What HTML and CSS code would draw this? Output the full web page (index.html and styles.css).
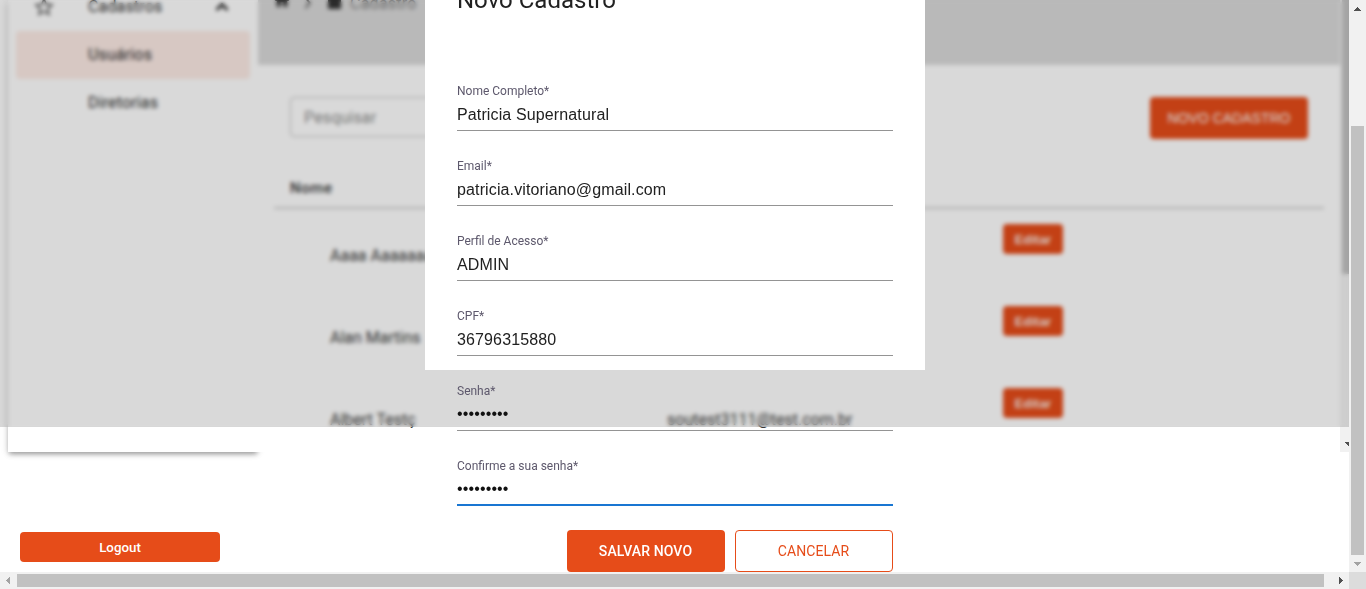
FILE: index.html
```html
<!DOCTYPE html>
<html lang="pt-BR">
<head>
<meta charset="utf-8">
<title>Novo Cadastro</title>
<link rel="stylesheet" href="styles.css">
</head>
<body>
<div class="window">
  <div class="viewport">
    <div class="app">
      <aside class="sidebar">
        <nav class="menu">
          <div class="menu-item">
            <svg class="star" viewBox="0 0 24 24"><path d="M22 9.24l-7.19-.62L12 2 9.19 8.63 2 9.24l5.46 4.73L5.82 21 12 17.27 18.18 21l-1.63-7.03L22 9.24zM12 15.4l-3.76 2.27 1-4.28-3.32-2.88 4.38-.38L12 6.1l1.71 4.04 4.38.38-3.32 2.88 1 4.28L12 15.4z"/></svg>
            <span class="menu-label">Cadastros</span>
            <svg class="caret" viewBox="0 0 24 24"><path d="M12 8l-6 6 1.41 1.41L12 10.83l4.59 4.58L18 14z"/></svg>
          </div>
          <div class="menu-item active"><span class="menu-label">Usuários</span></div>
          <div class="menu-item"><span class="menu-label">Diretorias</span></div>
        </nav>
      </aside>
      <main class="content">
        <header class="crumbs">
          <svg class="crumb-home" viewBox="0 0 24 24"><path d="M10 20v-6h4v6h5v-8h3L12 3 2 12h3v8z"/></svg>
          <svg class="crumb-sep" viewBox="0 0 10 16"><path d="M2 2l5 6-5 6"/></svg>
          <span class="crumb-box"></span>
          <span class="crumb-text">Cadastro</span>
        </header>
        <div class="toolbar">
          <div class="search">Pesquisar</div>
          <button class="btn btn-new">NOVO CADASTRO</button>
        </div>
        <div class="table">
          <div class="thead">Nome</div>
          <div class="row"><span class="name">Aaaa Aaaaaaa</span><span class="mail"></span><button class="btn btn-edit">Editar</button></div>
          <div class="row"><span class="name">Alan Martins</span><span class="mail"></span><button class="btn btn-edit">Editar</button></div>
          <div class="row"><span class="name">Albert Testç</span><span class="mail">soutest3111@test.com.br</span><button class="btn btn-edit">Editar</button></div>
        </div>
      </main>
      <div class="inner-scroll">
        <div class="inner-thumb"></div>
        <svg class="inner-arrow" viewBox="0 0 17 17"><path d="M5 7h7v1h-1v1h-1v1H9v1H8v-1H7V9H6V8H5z"/></svg>
      </div>
    </div>
    <footer class="logout-area"><button class="btn btn-logout">Logout</button></footer>

    <div class="overlay">
      <section class="modal">
        <h2 class="modal-title">Novo Cadastro</h2>
        <form class="form">
          <div class="field"><label>Nome Completo*</label><div class="value">Patricia Supernatural</div></div>
          <div class="field"><label>Email*</label><div class="value">patricia.vitoriano@gmail.com</div></div>
          <div class="field"><label>Perfil de Acesso*</label><div class="value">ADMIN</div></div>
          <div class="field"><label>CPF*</label><div class="value">36796315880</div></div>
          <div class="field"><label>Senha*</label><div class="value dots">•••••••••</div></div>
          <div class="field focused"><label>Confirme a sua senha*</label><div class="value dots">•••••••••</div></div>
          <div class="actions">
            <button type="button" class="btn btn-action">SALVAR NOVO</button>
            <button type="button" class="btn btn-action outlined">CANCELAR</button>
          </div>
        </form>
      </section>
    </div>
  </div>
  <div class="vbar">
    <svg class="arrow dark" viewBox="0 0 17 17"><path d="M8 7h1v1h1v1h1v1h1v1H5v-1h1V9h1V8h1z"/></svg>
    <div class="vthumb"></div>
    <svg class="arrow" viewBox="0 0 17 17"><path d="M5 7h7v1h-1v1h-1v1H9v1H8v-1H7V9H6V8H5z"/></svg>
  </div>
  <div class="hbar">
    <svg class="arrow" viewBox="0 0 17 17"><path d="M10 5v7H9v-1H8v-1H7V9H6V8h1V7h1V6h1V5z"/></svg>
    <div class="hthumb"></div>
    <svg class="arrow dark" viewBox="0 0 17 17"><path d="M7 5v7h1v-1h1v-1h1V9h1V8h-1V7H9V6H8V5z"/></svg>
  </div>
  <div class="corner"></div>
</div>
</body>
</html>
```

FILE: styles.css
```css
* { box-sizing: border-box; }
body { margin: 0; overflow: hidden; font-family: Roboto, sans-serif; color: #212121; }
svg { display: block; flex: none; fill: currentColor; }

.window {
  display: grid;
  grid-template: 572px 17px / 1349px 17px;
  width: 1366px;
  height: 589px;
}
.viewport { position: relative; overflow: hidden; background: #fff; }

.btn {
  border: 0;
  border-radius: 4px;
  padding: 0;
  background: #e64c19;
  color: #fff;
  font: 500 14px Roboto, sans-serif;
}

/* Application behind the dialog */
.app { display: flex; width: 1357px; height: 452px; padding-left: 8px; }
.sidebar {
  width: 250px;
  background: #fff;
  box-shadow: 0 3px 5px -1px rgba(0,0,0,.35), 0 1px 8px rgba(0,0,0,.12);
}
.menu { margin-top: -17px; padding: 0 8px; }
.menu-item { display: flex; align-items: center; height: 48px; padding-left: 72px; border-radius: 4px; }
.menu-item.active { background: #fdebe6; }
.menu-item:first-child { padding: 0 16px; }
.menu-label { font-size: 16px; line-height: 24px; letter-spacing: .15px; color: #2c2c2c; }
.star { width: 24px; height: 24px; margin-right: 32px; color: #555; }
.caret { width: 24px; height: 24px; margin-left: auto; stroke: currentColor; }

.content { position: relative; width: 1082px; height: 452px; background: #fff; }
.crumbs { display: flex; height: 65px; padding-left: 15px; background: #dadada; color: #333; }
.crumbs > * { flex: none; }
.crumb-home { width: 18px; height: 18px; margin-top: -8px; }
.crumb-sep { width: 10px; height: 14px; margin: -4px 0 0 12px; fill: none; stroke: #555; stroke-width: 2; }
.crumb-box { width: 13px; height: 14px; margin: -5px 9px 0 15px; background: #333; }
.crumb-text { margin-top: -8px; font-size: 16px; line-height: 24px; letter-spacing: .25px; color: #808080; }

.toolbar { display: flex; justify-content: space-between; padding: 32px 32px 0; height: 102px; }
.search {
  width: 320px;
  height: 40px;
  padding-left: 13px;
  border: 1px solid #bdbdbd;
  border-radius: 4px;
  font-size: 16px;
  line-height: 40px;
  letter-spacing: .15px;
  color: #8a8a8a;
}
.btn-new { width: 158px; height: 42px; font: 14px "Liberation Sans", sans-serif; }
.table { padding: 0 16px; }
.thead { height: 42px; padding-left: 16px; border-bottom: 2px solid #d0d0d0; font-size: 15px; font-weight: 500; line-height: 42px; letter-spacing: .6px; color: #333; }
.row { display: grid; grid-template-columns: 337px 336px 60px; height: 82px; padding: 15px 0 0 56px; }
.name, .mail { padding-top: 20px; font-size: 16px; line-height: 24px; color: #383838; }
.btn-edit { height: 30px; font: bold 13px "Liberation Sans", sans-serif; color: #fbeae4; }

.inner-scroll { display: flex; flex-direction: column; justify-content: space-between; width: 17px; background: #f1f1f1; }
.inner-thumb { width: 13px; height: 274px; margin-left: 2px; background: #c1c1c1; }
.inner-arrow { width: 17px; height: 17px; color: #505050; shape-rendering: crispEdges; }

.logout-area { padding: 80px 20px 0; }
.btn-logout { width: 200px; height: 30px; font-size: 13.33px; }

/* Dialog */
.overlay {
  position: absolute;
  inset: 0 0 auto;
  height: 427px;
  background: rgba(0,0,0,.15);
}
.overlay::before { content: ""; position: absolute; inset: 0; backdrop-filter: blur(2px); }
.modal { position: relative; width: 500px; height: 370px; margin-left: 425px; padding: 0 32px; background: #fff; }
.modal-title { margin: -16px 0 67px; font-size: 24px; font-weight: 400; line-height: 32px; color: #212121; }
.modal::before { content: ""; display: table; }
.field { height: 48px; margin-bottom: 27px; border-bottom: 1px solid #949494; }
.field label { display: block; height: 17px; font-size: 12px; line-height: 16px; color: #5d586c; }
.value { font: 16px/30px "Liberation Sans", sans-serif; letter-spacing: .13px; }
.value.dots { line-height: 28px; color: #111; }
.focused { border-bottom: 2px solid #1976d2; margin-bottom: 24px; }
.actions { display: flex; justify-content: flex-end; gap: 10px; }
.btn-action { width: 158px; height: 42px; padding-right: 1px; letter-spacing: .1px; }
.outlined { border: 1px solid #e64c19; background: #fff; color: #e64c19; font-weight: 400; }

/* Scrollbars */
.vbar, .hbar { display: flex; background: #f1f1f1; }
.vbar { flex-direction: column; justify-content: space-between; }
.arrow { width: 17px; height: 17px; color: #a3a3a3; shape-rendering: crispEdges; }
.arrow.dark { color: #505050; }
.vthumb { width: 13px; height: 429px; margin: 109px 2px 0; background: #c1c1c1; }
.hbar { align-items: center; }
.hthumb { width: 1307px; height: 13px; margin-right: 8px; background: #c1c1c1; }
.corner { background: #dcdcdc; }
```
